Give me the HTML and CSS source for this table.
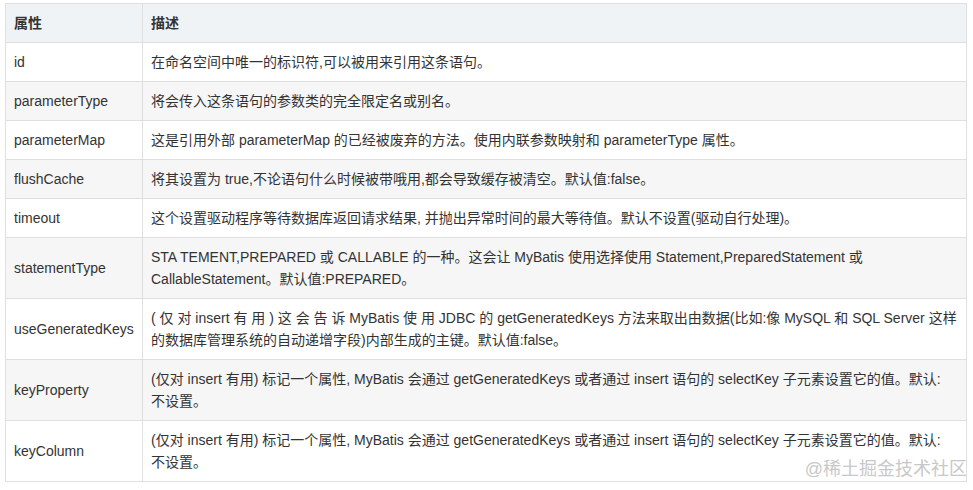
FILE: index.html
```html
<!doctype html>
<html lang="zh-CN">
  <head>
    <meta charset="UTF-8" />
    <meta name="viewport" content="width=device-width, initial-scale=1.0" />
    <title>select 元素的属性</title>
    <link rel="stylesheet" href="styles.css">
  </head>
  <body>
    <div class="page">
      <table class="attr-table">
        <colgroup>
          <col class="col-name" />
          <col />
        </colgroup>
        <thead>
          <tr>
            <th>属性</th>
            <th>描述</th>
          </tr>
        </thead>
        <tbody>
          <tr>
            <td>id</td>
            <td>在命名空间中唯一的标识符,可以被用来引用这条语句。</td>
          </tr>
          <tr>
            <td>parameterType</td>
            <td>将会传入这条语句的参数类的完全限定名或别名。</td>
          </tr>
          <tr>
            <td>parameterMap</td>
            <td>这是引用外部 parameterMap 的已经被废弃的方法。使用内联参数映射和 parameterType 属性。</td>
          </tr>
          <tr>
            <td>flushCache</td>
            <td>将其设置为 true,不论语句什么时候被带哦用,都会导致缓存被清空。默认值:false。</td>
          </tr>
          <tr>
            <td>timeout</td>
            <td>这个设置驱动程序等待数据库返回请求结果, 并抛出异常时间的最大等待值。默认不设置(驱动自行处理)。</td>
          </tr>
          <tr>
            <td>statementType</td>
            <td>STA TEMENT,PREPARED 或 CALLABLE 的一种。这会让 MyBatis 使用选择使用 Statement,PreparedStatement 或 CallableStatement。默认值:PREPARED。</td>
          </tr>
          <tr>
            <td>useGeneratedKeys</td>
            <td>( 仅 对 insert 有 用 ) 这 会 告 诉 MyBatis 使 用 JDBC 的 getGeneratedKeys 方法来取出由数据(比如:像 MySQL 和 SQL Server 这样的数据库管理系统的自动递增字段)内部生成的主键。默认值:false。</td>
          </tr>
          <tr>
            <td>keyProperty</td>
            <td>(仅对 insert 有用) 标记一个属性, MyBatis 会通过 getGeneratedKeys 或者通过 insert 语句的 selectKey 子元素设置它的值。默认: 不设置。</td>
          </tr>
          <tr>
            <td>keyColumn</td>
            <td>(仅对 insert 有用) 标记一个属性, MyBatis 会通过 getGeneratedKeys 或者通过 insert 语句的 selectKey 子元素设置它的值。默认: 不设置。</td>
          </tr>
        </tbody>
      </table>
      <div class="watermark">@稀土掘金技术社区</div>
    </div>
  </body>
</html>
```

FILE: styles.css
```css
body {
  margin: 0;
  background: #fff;
  font-family: 'Liberation Sans', Arial, 'Noto Sans CJK SC', sans-serif;
  font-size: 14px;
  color: #333;
}

.page {
  position: relative;
  padding: 3px 0 0 5px;
  height: 487px;
}

.attr-table {
  width: 962px;
  border-collapse: collapse;
  table-layout: fixed;
}

.col-name {
  width: 137px;
}

.attr-table th,
.attr-table td {
  border: 1px solid #dfdfdf;
  padding: 8px 8px;
  line-height: 22px;
  text-align: left;
  vertical-align: middle;
}

.attr-table th {
  background-color: #eff3f5;
  font-weight: bold;
}

.attr-table tbody tr:nth-child(even) td {
  background-color: #f6f6f6;
}

.watermark {
  position: absolute;
  right: 6px;
  bottom: 10px;
  font-size: 18px;
  line-height: 22px;
  color: #c8c8c8;
  text-shadow: 0 0 1px #fff;
}
```
